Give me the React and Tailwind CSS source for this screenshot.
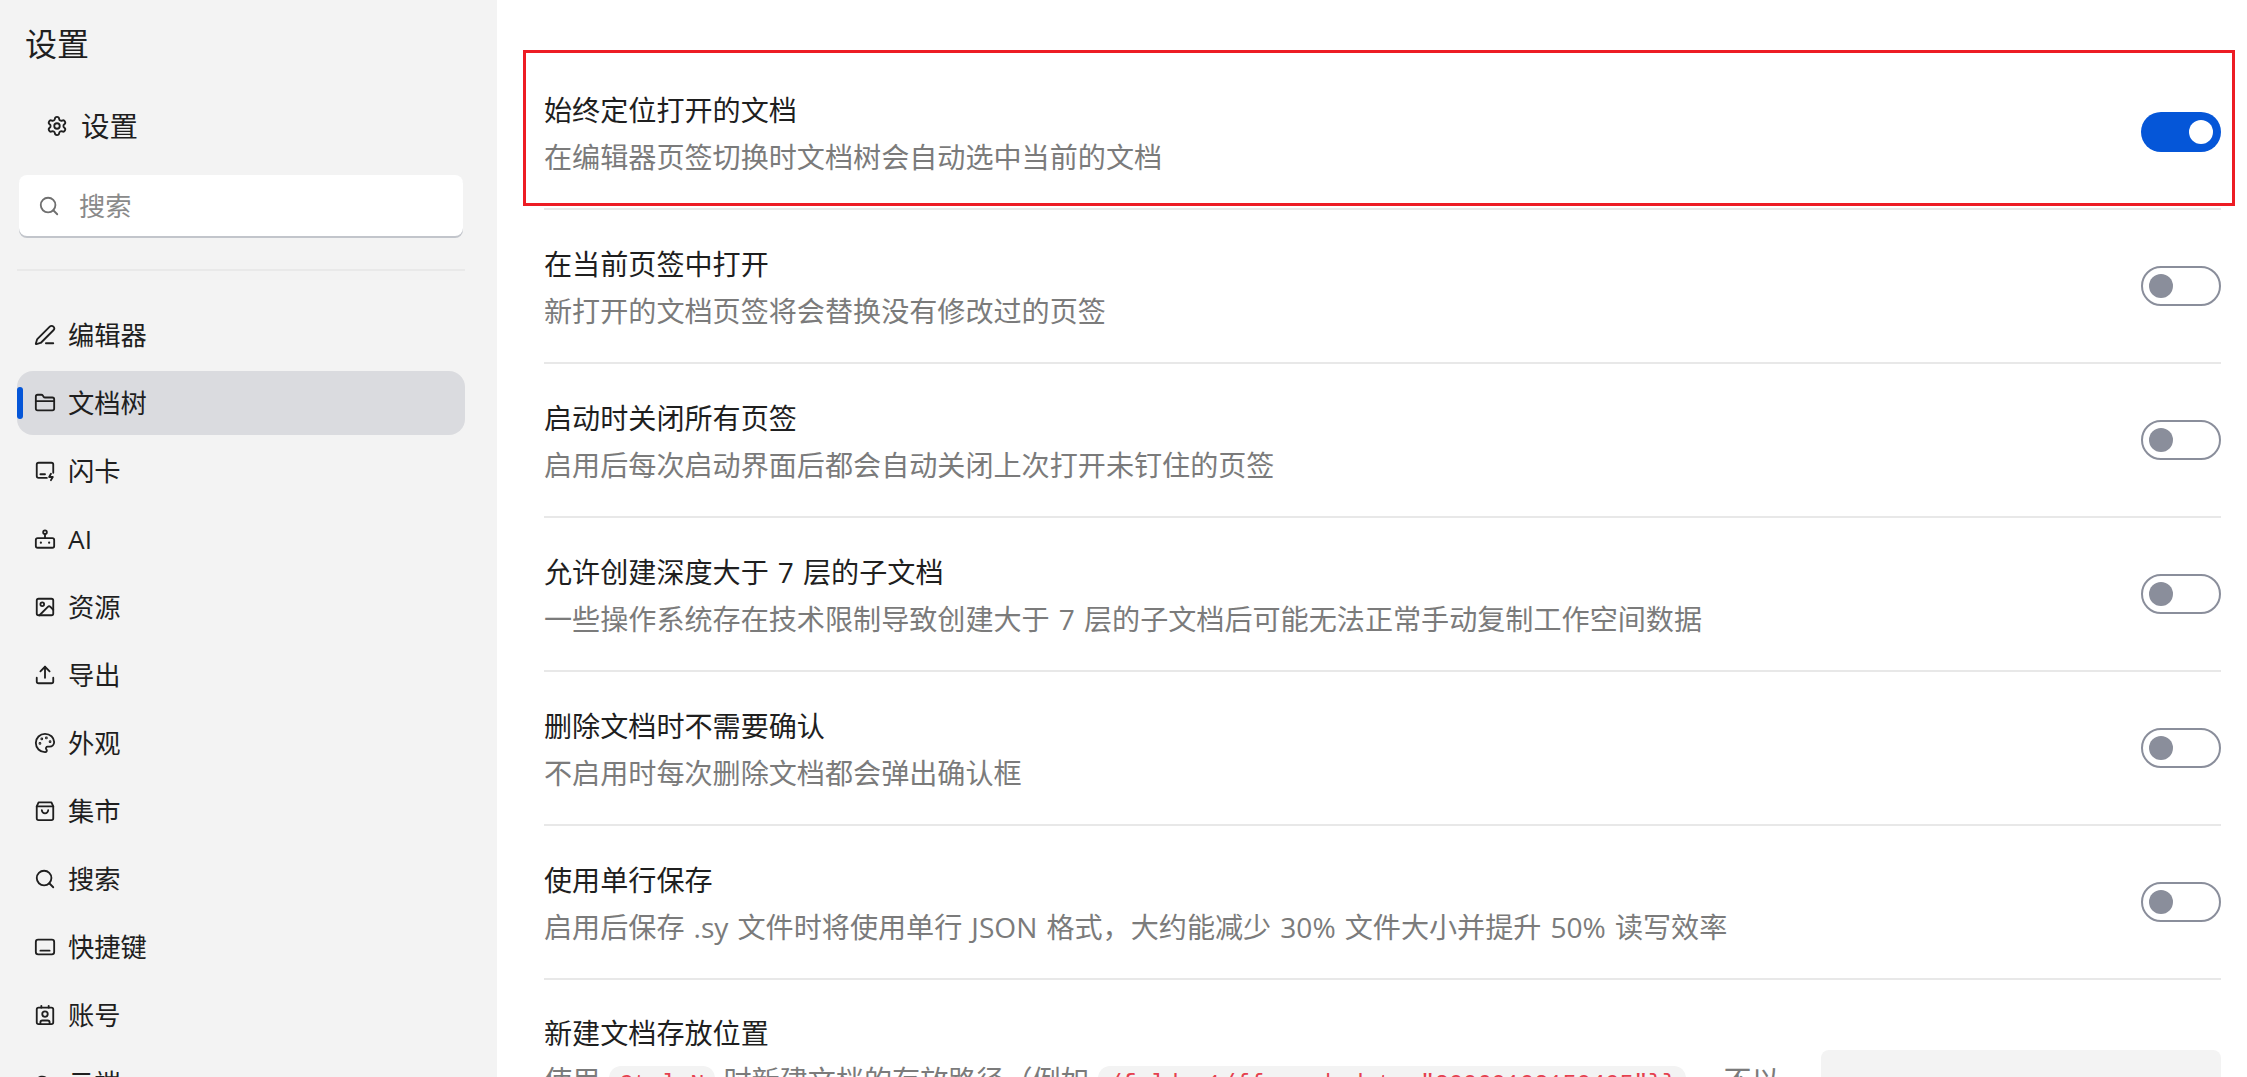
import React from 'react';
import { Settings, Search, PenLine, FolderClosed, Image, Upload, Palette, Contact, Cloud } from 'lucide-react';

const FlashIcon = () => (
    <svg width="22" height="22" viewBox="0 0 24 24" fill="none" stroke="currentColor" strokeWidth="2" strokeLinecap="round" strokeLinejoin="round">
        <path d="M14 19.5H5a2 2 0 0 1-2-2V5a2 2 0 0 1 2-2h14a2 2 0 0 1 2 2v9" />
        <path d="M7 15.5h5" />
        <path d="M18.5 15l-2 3.5h4l-2 3.5" />
    </svg>
);

const RobotIcon = () => (
    <svg width="22" height="22" viewBox="0 0 24 24" fill="none" stroke="currentColor" strokeWidth="2" strokeLinecap="round" strokeLinejoin="round">
        <rect x="2" y="11" width="20" height="10.5" rx="2" />
        <circle cx="12" cy="4.5" r="2" />
        <path d="M12 6.5V11" />
        <path d="M7.5 16h.01M16.5 16h.01" strokeWidth="2.4" />
    </svg>
);

const BagIcon = () => (
    <svg width="22" height="22" viewBox="0 0 24 24" fill="none" stroke="currentColor" strokeWidth="2" strokeLinecap="round" strokeLinejoin="round">
        <path d="M5 2.5h14l2 4.5v13a2 2 0 0 1-2 2H5a2 2 0 0 1-2-2V7z" />
        <path d="M3 7h18" />
        <path d="M8.5 11a3.5 3.5 0 0 0 7 0" />
    </svg>
);

const KeyboardIcon = () => (
    <svg width="22" height="22" viewBox="0 0 24 24" fill="none" stroke="currentColor" strokeWidth="2" strokeLinecap="round" strokeLinejoin="round">
        <rect x="2" y="4" width="20" height="16" rx="2.5" />
        <path d="M7 16h10" />
    </svg>
);

const icon = (Comp) => <Comp size={22} strokeWidth={2} />;

const navItems = [
    { label: '编辑器', icon: icon(PenLine) },
    { label: '文档树', icon: icon(FolderClosed), active: true },
    { label: '闪卡', icon: <FlashIcon /> },
    { label: 'AI', icon: <RobotIcon /> },
    { label: '资源', icon: icon(Image) },
    { label: '导出', icon: icon(Upload) },
    { label: '外观', icon: icon(Palette) },
    { label: '集市', icon: <BagIcon /> },
    { label: '搜索', icon: icon(Search) },
    { label: '快捷键', icon: <KeyboardIcon /> },
    { label: '账号', icon: icon(Contact) },
    { label: '云端', icon: icon(Cloud) },
];

const rows = [
    { title: '始终定位打开的文档', desc: '在编辑器页签切换时文档树会自动选中当前的文档', on: true },
    { title: '在当前页签中打开', desc: '新打开的文档页签将会替换没有修改过的页签' },
    { title: '启动时关闭所有页签', desc: '启用后每次启动界面后都会自动关闭上次打开未钉住的页签' },
    { title: '允许创建深度大于 7 层的子文档', desc: '一些操作系统存在技术限制导致创建大于 7 层的子文档后可能无法正常手动复制工作空间数据' },
    { title: '删除文档时不需要确认', desc: '不启用时每次删除文档都会弹出确认框' },
    { title: '使用单行保存', desc: '启用后保存 .sy 文件时将使用单行 JSON 格式，大约能减少 30% 文件大小并提升 50% 读写效率' },
];

const Toggle = ({ on }) => (
    on ? (
        <div className="flex h-[40px] w-[80px] shrink-0 items-center justify-end rounded-full bg-[#0556d8] pr-[8px]">
            <div className="h-[24px] w-[24px] rounded-full bg-white" />
        </div>
    ) : (
        <div className="flex h-[40px] w-[80px] shrink-0 items-center rounded-full border-2 border-[#8a8e9b] pl-[6px]">
            <div className="h-[24px] w-[24px] rounded-full bg-[#8a8e9b]" />
        </div>
    )
);

const Chip = ({ children }) => (
    <code className="mx-[9px] rounded-[12px] bg-[#f3f3f3] px-[10px] py-[5px] font-['Liberation_Mono',monospace] text-[23.7px] text-[#e5414f] [word-spacing:0]">
        {children}
    </code>
);

export default function App() {
    return (
        <div className="flex h-screen w-screen overflow-hidden bg-white font-['Open_Sans','Noto_Sans_CJK_SC',sans-serif]">
            {/* Sidebar */}
            <aside className="flex w-[497px] shrink-0 flex-col bg-[#f3f3f3] pl-[17px] pr-[32px] text-[#1f1f1f]">
                <div className="flex h-[88px] shrink-0 items-center pl-[8px] text-[32px]">设置</div>
                <div className="flex h-[76px] shrink-0 items-center gap-[13px] pl-[29px] text-[28.5px]">
                    <Settings size={22} strokeWidth={2} />
                    <span>设置</span>
                </div>
                <div className="mx-[2px] mt-[11px] flex h-[61px] shrink-0 items-center gap-[19px] rounded-[8px] bg-white pl-[19px] text-[26.3px] text-[#8a8a8a] shadow-[0_2px_0_#c2c5cb]">
                    <Search size={22} strokeWidth={2} className="text-[#6f6f6f]" />
                    <span className="pt-[2px]">搜索</span>
                </div>
                <div className="mt-[33px] h-[2px] shrink-0 bg-[#e9e9e9]" />
                <nav className="mt-[32px] flex flex-col gap-[4px]">
                    {navItems.map((item) => (
                        <div
                            key={item.label}
                            className={`relative flex h-[64px] shrink-0 items-center gap-[12px] rounded-[16px] pl-[17px] text-[26.3px] ${item.active ? 'bg-[#dadbdf]' : ''}`}
                        >
                            {item.active && <span className="absolute left-0 top-[16px] h-[32px] w-[6px] rounded-[3px] bg-[#0556d8]" />}
                            {item.icon}
                            <span className="pt-[2px]">{item.label}</span>
                        </div>
                    ))}
                </nav>
            </aside>

            {/* Main */}
            <main className="relative flex-1 overflow-hidden pl-[47px] pr-[26px] pt-[56px]">
                {rows.map((row) => (
                    <div key={row.title} className="flex h-[154px] items-center justify-between border-b-2 border-[#e8e8e8]">
                        <div className="pt-[4px] text-[28.1px] leading-[47px] [word-spacing:1.8px]">
                            <div className="text-[#1f1f1f]">{row.title}</div>
                            <div className="text-[#7b7b7b]">{row.desc}</div>
                        </div>
                        <Toggle on={row.on} />
                    </div>
                ))}

                {/* Last row, cut off by the window */}
                <div className="flex gap-[30px]">
                    <div className="flex-1 pt-[30px] text-[28.1px] leading-[47px]">
                        <div className="text-[#1f1f1f]">新建文档存放位置</div>
                        <div className="text-[#7b7b7b]">
                            使用<Chip>Ctrl+N</Chip>时新建文档的存放路径（例如<Chip>/folder1/{'{{now | date "20060102150405"}}'}</Chip>。不以
                        </div>
                    </div>
                    <div className="mt-[70px] h-[96px] w-[400px] shrink-0 rounded-[8px] bg-[#f3f3f3]" />
                </div>

                {/* Red highlight drawn over the first row */}
                <div className="pointer-events-none absolute left-[26px] top-[50px] h-[156px] w-[1712px] border-[3px] border-[#ed1c24]" />
            </main>
        </div>
    );
}
